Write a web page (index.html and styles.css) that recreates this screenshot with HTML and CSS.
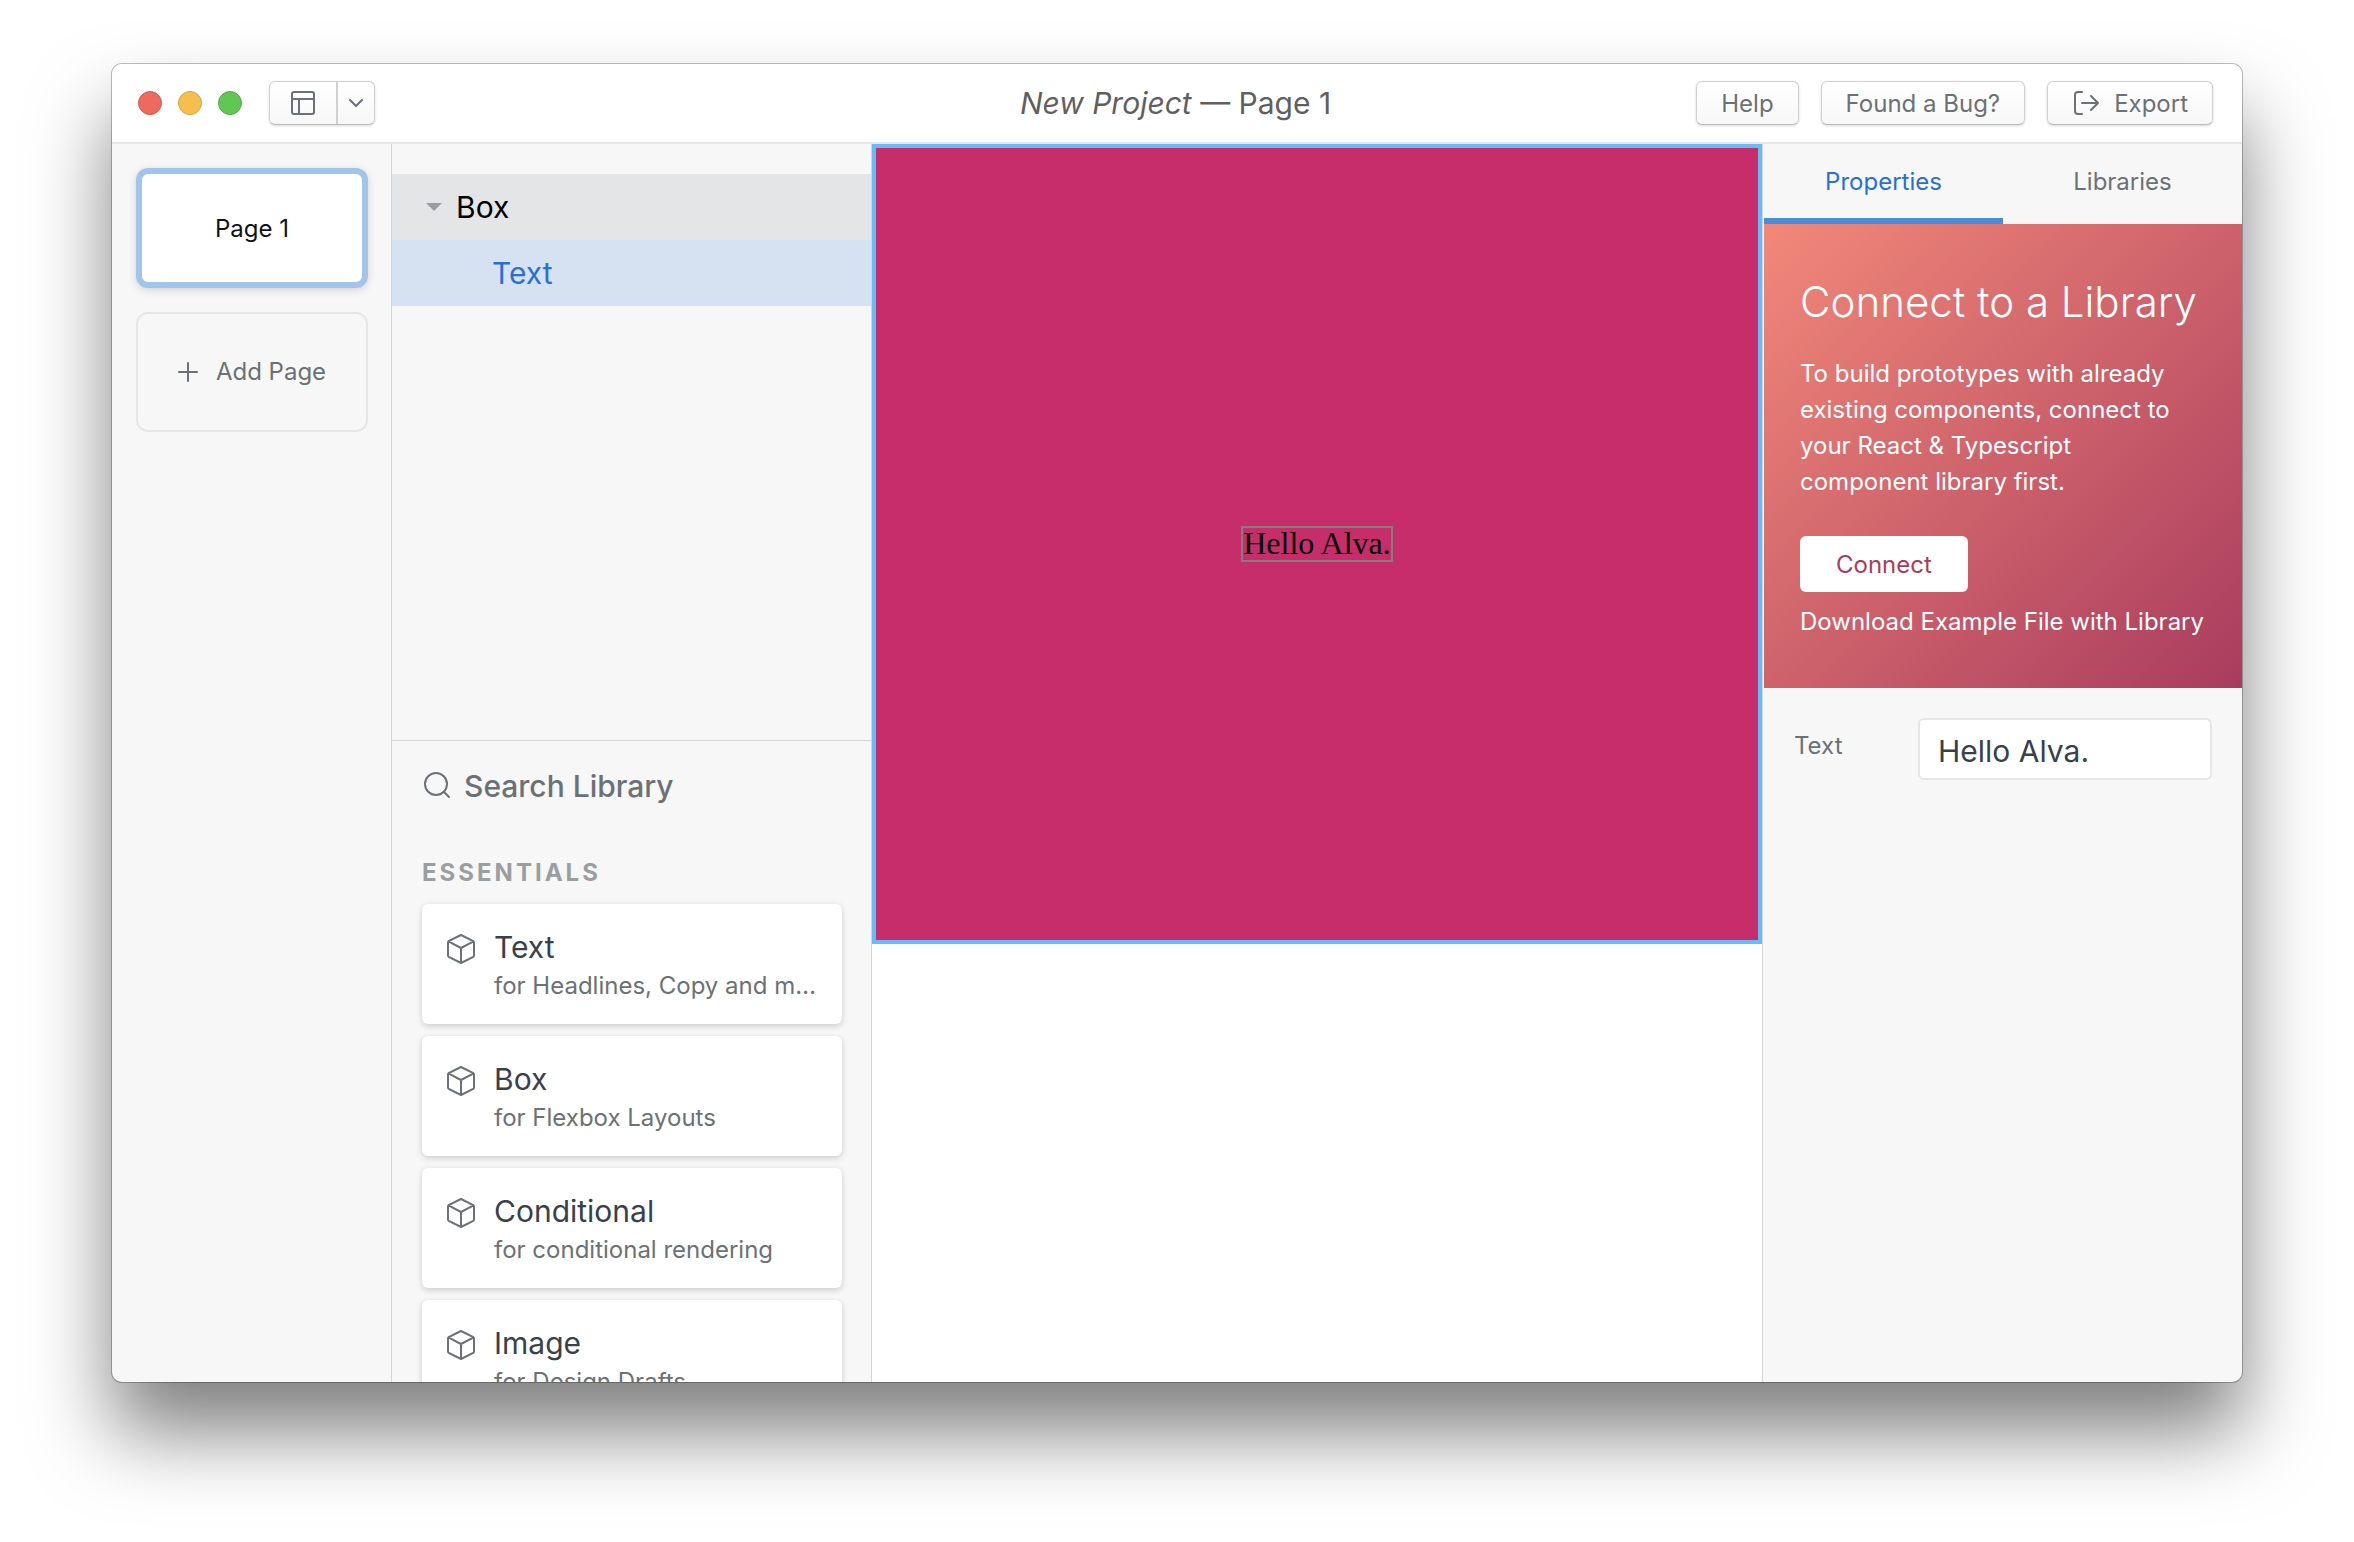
FILE: index.html
```html
<!DOCTYPE html>
<html lang="en">
<head>
<meta charset="utf-8">
<title>New Project — Page 1</title>
<link rel="stylesheet" href="styles.css">
</head>
<body>
<div class="window">
  <header class="titlebar">
    <div class="titlebar-left">
      <div class="lights"><span class="light light-close"></span><span class="light light-min"></span><span class="light light-max"></span></div>
      <div class="split-button">
        <button class="split-main" aria-label="Layout"><svg class="icon" width="26" height="26" viewBox="0 0 26 26"><rect x="2" y="2" width="22" height="22" rx="2"/><path d="M2 9h22M9 9v15"/></svg></button>
        <button class="split-more" aria-label="More layouts"><svg class="icon" width="16" height="16" viewBox="0 0 16 16"><path d="M2 5l6 6 6-6"/></svg></button>
      </div>
    </div>
    <h1 class="title"><em>New Project</em> — Page 1</h1>
    <div class="titlebar-right">
      <button class="button">Help</button>
      <button class="button">Found a Bug?</button>
      <button class="button"><svg class="icon" width="28" height="26" viewBox="0 0 28 26"><path d="M10 1H6a3 3 0 0 0-3 3v16a3 3 0 0 0 3 3h4M10 12h16M19 5l7 7-7 7"/></svg>Export</button>
    </div>
  </header>
  <main class="workspace">
    <nav class="pages" aria-label="Pages">
      <button class="page page-active">Page 1</button>
      <button class="page page-add"><svg class="icon" width="20" height="20" viewBox="0 0 20 20"><path d="M10 1v18M1 10h18"/></svg>Add Page</button>
    </nav>
    <section class="sidebar">
      <ul class="layers">
        <li><button class="layer layer-parent"><svg class="caret" width="16" height="8" viewBox="0 0 16 8"><path d="M0 0h16L8 8z"/></svg>Box</button></li>
        <li><button class="layer layer-selected">Text</button></li>
      </ul>
      <div class="library">
        <label class="search">
          <svg class="icon" width="30" height="28" viewBox="0 0 30 28"><circle cx="14" cy="12" r="11"/><path d="M22 20l5 5"/></svg>
          <input class="search-input" type="search" placeholder="Search Library" aria-label="Search Library">
        </label>
        <h2 class="group-title">ESSENTIALS</h2>
        <ul class="cards">
          <li class="card"><svg class="icon card-icon" width="30" height="32" viewBox="0 0 30 32"><path d="M2 9.600v12.800q0 1.200 1.200 1.800L15 30l11.800-5.800q1.200-.6 1.200-1.800V9.600q0-1.200-1.200-1.800L15 2 3.200 7.800Q2 8.400 2 9.600zM2.400 8.400 15 15l12.600-6.600M15 15v15"/></svg><div class="card-body"><h3 class="card-title">Text</h3><p class="card-note">for Headlines, Copy and more</p></div></li>
          <li class="card"><svg class="icon card-icon" width="30" height="32" viewBox="0 0 30 32"><path d="M2 9.600v12.800q0 1.200 1.200 1.800L15 30l11.800-5.800q1.200-.6 1.200-1.800V9.600q0-1.200-1.200-1.800L15 2 3.200 7.800Q2 8.400 2 9.600zM2.400 8.400 15 15l12.600-6.600M15 15v15"/></svg><div class="card-body"><h3 class="card-title">Box</h3><p class="card-note">for Flexbox Layouts</p></div></li>
          <li class="card"><svg class="icon card-icon" width="30" height="32" viewBox="0 0 30 32"><path d="M2 9.600v12.800q0 1.200 1.200 1.800L15 30l11.800-5.800q1.200-.6 1.200-1.800V9.600q0-1.200-1.200-1.800L15 2 3.200 7.800Q2 8.400 2 9.600zM2.400 8.400 15 15l12.600-6.600M15 15v15"/></svg><div class="card-body"><h3 class="card-title">Conditional</h3><p class="card-note">for conditional rendering</p></div></li>
          <li class="card"><svg class="icon card-icon" width="30" height="32" viewBox="0 0 30 32"><path d="M2 9.600v12.800q0 1.200 1.200 1.800L15 30l11.800-5.800q1.200-.6 1.200-1.800V9.600q0-1.200-1.200-1.800L15 2 3.200 7.800Q2 8.400 2 9.600zM2.400 8.400 15 15l12.600-6.600M15 15v15"/></svg><div class="card-body"><h3 class="card-title">Image</h3><p class="card-note">for Design Drafts</p></div></li>
        </ul>
      </div>
    </section>
    <section class="canvas" aria-label="Canvas">
      <div class="frame"><p class="frame-text">Hello Alva.</p></div>
    </section>
    <aside class="inspector">
      <div class="tabs" role="tablist">
        <button class="tab tab-active" role="tab" aria-selected="true">Properties</button>
        <button class="tab" role="tab" aria-selected="false">Libraries</button>
      </div>
      <div class="promo">
        <h2 class="promo-title">Connect to a Library</h2>
        <p class="promo-text">To build prototypes with already existing components, connect to your React &amp; Typescript component library first.</p>
        <button class="promo-button">Connect</button>
        <a class="promo-link" href="#">Download Example File with Library</a>
      </div>
      <div class="property">
        <label class="property-label" for="text-value">Text</label>
        <input class="property-input" id="text-value" type="text" value="Hello Alva.">
      </div>
    </aside>
  </main>
</div>
</body>
</html>
```
FILE: styles.css
```css
* {
  box-sizing: border-box;
  margin: 0;
  padding: 0;
}

body {
  display: flex;
  height: 100vh;
  padding: 64px 112px 160px;
  overflow: hidden;
  background: #fff;
  color: #6b7176;
  font: 24px/36px Inter, "Liberation Sans", sans-serif;
}

button,
input {
  border: 0;
  background: none;
  color: inherit;
  font: inherit;
}

ul {
  list-style: none;
}

.icon {
  flex: none;
  fill: none;
  stroke: #6b7176;
  stroke-width: 2;
  stroke-linecap: round;
  stroke-linejoin: round;
}

.window {
  display: flex;
  flex: 1;
  flex-direction: column;
  min-width: 0;
  overflow: hidden;
  border-radius: 10px;
  background: #f7f7f7;
  box-shadow: 0 0 0 1px rgba(0, 0, 0, 0.25), 0 50px 80px rgba(0, 0, 0, 0.5);
}

/* Title bar */

.titlebar {
  display: grid;
  flex: none;
  grid-template-columns: 1fr auto 1fr;
  align-items: center;
  height: 80px;
  padding: 0 29px 0 26px;
  border-bottom: 2px solid #e6e6e6;
  background: #fff;
}

.titlebar-left,
.lights,
.titlebar-right {
  display: flex;
  align-items: center;
}

.titlebar-left {
  gap: 27px;
}

.lights {
  gap: 16px;
}

.light {
  width: 24px;
  height: 24px;
  border: 1px solid;
  border-radius: 50%;
}

.light-close {
  border-color: #de5448;
  background: #ec6a5e;
}

.light-min {
  border-color: #dea236;
  background: #f5bf4f;
}

.light-max {
  border-color: #4fab3e;
  background: #62c655;
}

.split-button,
.button {
  display: flex;
  align-items: center;
  height: 44px;
  border: 1px solid #d0d0d0;
  border-bottom-color: #bbb;
  border-radius: 6px;
  background: linear-gradient(#fff, #f7f7f7);
  box-shadow: 0 1px 3px rgba(0, 0, 0, 0.15);
}

.split-main,
.split-more {
  display: flex;
  align-items: center;
  justify-content: center;
  height: 100%;
}

.split-main {
  width: 68px;
  border-right: 2px solid #d0d0d0;
}

.split-more {
  width: 36px;
}

.title {
  color: #5f5f5f;
  font-size: 30px;
  font-weight: 400;
}

.titlebar-right {
  justify-content: flex-end;
  gap: 22px;
}

.button {
  gap: 14px;
  padding: 2px 24px 0;
}

/* Workspace columns */

.workspace {
  display: grid;
  flex: 1;
  grid-template-columns: 280px 480px 1fr 480px;
  min-height: 0;
}

.pages {
  display: flex;
  flex-direction: column;
  gap: 24px;
  padding: 24px 23px 24px 24px;
  border-right: 1px solid #d3d5d6;
}

.page {
  display: flex;
  align-items: center;
  justify-content: center;
  gap: 18px;
  height: 120px;
  border-radius: 12px;
}

.page-active {
  padding-top: 2px;
  border: 6px solid #a1c4ea;
  background: #fff;
  color: #0d141c;
  box-shadow: 0 2px 8px rgba(0, 0, 0, 0.15);
}

.page-add {
  border: 2px solid #e6e6e6;
}

/* Layers and component library */

.sidebar {
  display: grid;
  grid-template-rows: 597fr 641fr;
  min-height: 0;
  border-right: 1px solid #d3d5d6;
}

.layers {
  padding-top: 30px;
  border-bottom: 1px solid #d3d5d6;
}

.layer {
  display: flex;
  align-items: center;
  gap: 14px;
  width: 100%;
  height: 66px;
  font-size: 30px;
}

.layer-parent {
  padding-left: 34px;
  background: #e4e5e7;
  color: #000;
}

.layer-selected {
  padding-left: 100px;
  background: #d6e1f2;
  color: #2870d4;
}

.caret {
  fill: #9a9ea1;
}

.library {
  min-height: 0;
  padding: 24px 29px 0 30px;
  overflow: hidden;
}

.search {
  display: flex;
  align-items: center;
  gap: 12px;
  height: 42px;
}

.search-input {
  flex: 1;
  min-width: 0;
  font-size: 30px;
  font-weight: 500;
}

.search-input::placeholder {
  color: #6b7176;
}

.group-title {
  margin: 48px 0 13px;
  color: #9a9ea1;
  font-size: 24px;
  font-weight: 700;
  letter-spacing: 3px;
}

.cards {
  display: flex;
  flex-direction: column;
  gap: 12px;
}

.card {
  display: flex;
  gap: 18px;
  height: 120px;
  padding: 24px;
  border-radius: 6px;
  background: #fff;
  box-shadow: 0 2px 6px rgba(0, 0, 0, 0.18);
}

.card-icon {
  margin-top: 5px;
}

.card-body {
  min-width: 0;
}

.card-title {
  margin-bottom: 2px;
  color: #38414b;
  font-size: 30px;
  font-weight: 400;
  line-height: 38px;
}

.card-note {
  overflow: hidden;
  text-overflow: ellipsis;
  white-space: nowrap;
}

/* Canvas */

.canvas {
  min-width: 0;
  background: #fff;
}

.frame {
  display: flex;
  align-items: center;
  justify-content: center;
  height: 800px;
  border: 4px solid #64bdf9;
  background: #c72d6b;
}

.frame-text {
  padding-bottom: 2px;
  color: #000;
  font: 32px/30px "Liberation Serif", serif;
  outline: 2px solid #808080;
}

/* Inspector */

.inspector {
  padding-left: 1px;
  border-left: 1px solid #d3d5d6;
}

.tabs {
  display: grid;
  grid-template-columns: 1fr 1fr;
  height: 80px;
}

.tab {
  padding-top: 2px;
  border-bottom: 6px solid transparent;
}

.tab-active {
  border-bottom-color: #4a8cd9;
  color: #2870d4;
}

.promo {
  display: flex;
  flex-direction: column;
  align-items: flex-start;
  padding: 48px 36px;
  background: linear-gradient(135deg, #f28879, #a93c5e);
  color: #fff;
}

.promo-title {
  margin-bottom: 24px;
  font-size: 42px;
  font-weight: 300;
  line-height: 60px;
  white-space: nowrap;
}

.promo-text {
  max-width: 380px;
  margin-bottom: 36px;
}

.promo-button {
  height: 56px;
  margin-bottom: 12px;
  padding: 2px 36px 0;
  border-radius: 6px;
  background: #fff;
  color: #a93c5e;
}

.promo-link {
  color: inherit;
  text-decoration: none;
  white-space: nowrap;
}

.property {
  display: flex;
  padding: 30px;
}

.property-label {
  flex: 1;
  padding-top: 10px;
}

.property-input {
  width: 294px;
  height: 62px;
  padding: 4px 18px 0;
  border: 2px solid #e6e6e6;
  border-radius: 6px;
  background: #fff;
  color: #38414b;
  font-size: 30px;
}
```
